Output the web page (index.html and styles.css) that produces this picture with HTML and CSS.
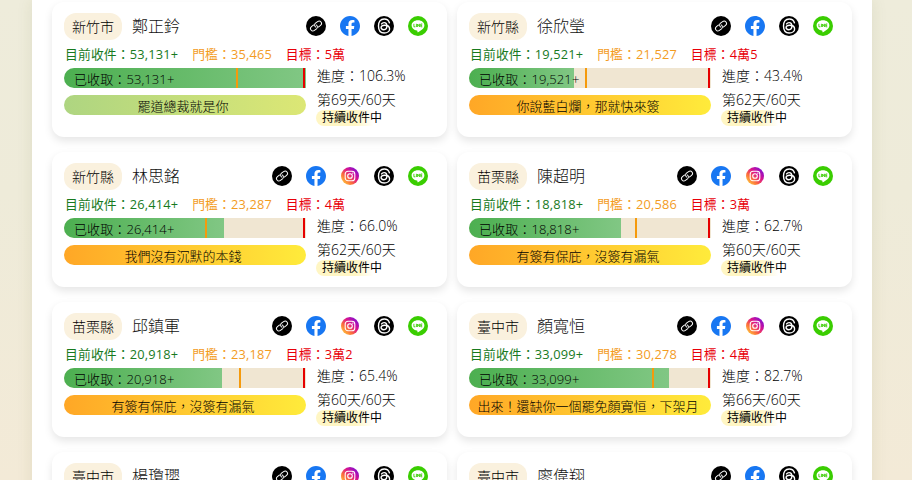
FILE: index.html
```
<!DOCTYPE html>
<html lang="zh-Hant">
<head>
    <meta charset="UTF-8">
    <meta name="viewport" content="width=device-width, initial-scale=1.0">
    <title>連署進度</title>
    <link rel="stylesheet" href="styles.css">
</head>
<body>
    <svg class="sprite" aria-hidden="true">
        <linearGradient id="ig" x1="0" y1="1" x2="1" y2="0">
            <stop offset="0.1" stop-color="#ffc83d"/>
            <stop offset=".35" stop-color="#fb6a3c"/>
            <stop offset=".6" stop-color="#d9128f"/>
            <stop offset=".9" stop-color="#7a10d8"/>
        </linearGradient>
        <symbol id="link" viewBox="0 0 20 20">
            <circle cx="10" cy="10" r="10" fill="#000"/>
            <g fill="none" stroke="#fff" stroke-width=".95" stroke-linecap="round" transform="rotate(-38 10 10)">
                <path d="M9 7.900A2.400 2.400 0 0 0 8.400 7.700H6a2.400 2.400 0 0 0 0 4.800h2.700a2.400 2.400 0 0 0 2.200-3.200"/>
                <path d="M11 12.100a2.400 2.400 0 0 0 .6.2H14a2.400 2.400 0 0 0 0-4.800h-2.700a2.400 2.400 0 0 0-2.200 3.200"/>
            </g>
        </symbol>
        <symbol id="facebook" viewBox="0 0 24 24">
            <circle cx="12" cy="12" r="11.8" fill="#fff"/>
            <path fill="#1877f2" d="M24 12.07C24 5.44 18.63 0 12 0S0 5.44 0 12.07C0 18.1 4.39 23.1 10.13 24v-8.44H7.08v-3.49h3.05V9.41c0-3.02 1.79-4.69 4.53-4.69 1.31 0 2.68.24 2.68.24v2.97h-1.51c-1.49 0-1.96.93-1.96 1.89v2.25h3.33l-.53 3.49h-2.8V24C19.61 23.1 24 18.1 24 12.07z"/>
        </symbol>
        <symbol id="instagram" viewBox="0 0 20 20">
            <circle cx="10" cy="10" r="9" fill="url(#ig)"/>
            <g fill="none" stroke="#fff" stroke-width="1.1">
                <rect x="5.2" y="5.2" width="9.6" height="9.6" rx="2.8"/>
                <circle cx="10" cy="10" r="2.3"/>
            </g>
            <circle cx="12.8" cy="7.2" r=".65" fill="#fff"/>
        </symbol>
        <symbol id="threads" viewBox="0 0 20 20">
            <circle cx="10" cy="10" r="10" fill="#000"/>
            <path fill="none" stroke="#fff" stroke-width="1.4" stroke-linecap="round" d="M15.4 6.800C14.700 4.300 12.900 3 10.200 3 6.400 3 4.500 5.700 4.500 10s1.900 7 5.700 7c3.200 0 5.400-1.800 5.400-4.100 0-2.400-2.300-3.600-5.100-3.600-2.100 0-3.400.9-3.400 2.300 0 1.300 1.200 2.100 2.700 2.100 2 0 3.100-1.400 3.100-3.700 0-2.300-1-3.400-2.800-3.400-1.200 0-2 .4-2.500 1.300"/>
        </symbol>
        <symbol id="line" viewBox="0 0 20 20">
            <circle cx="10" cy="10" r="10" fill="#3acd01"/>
            <path fill="#fff" d="M10 4.300c-3.700 0-6.400 2.200-6.400 5.100 0 2.600 2.200 4.600 5.300 5 .7.1.6.5.5 1.500 0 .5.300.5.700.3 2.300-1.300 6.300-3.800 6.300-6.800C16.400 6.500 13.700 4.300 10 4.300z"/>
            <path fill="none" stroke="#3acd01" stroke-width=".9" d="M5.900 7.800v3h1.500M8.400 7.800v3.200M9.600 11V8l2 2.800V7.800M14.300 8h-1.500v2.800h1.500M12.800 9.400h1.400"/>
        </symbol>
    </svg>

    <main id="cards" class="container"></main>

    <script>
        const cards = [
            { area: '新竹市', name: '鄭正鈐', count: 53131, gate: 35465, goal: 50000, goalText: '5萬', day: 69, slogan: '罷道總裁就是你', ig: false, done: true },
            { area: '新竹縣', name: '徐欣瑩', count: 19521, gate: 21527, goal: 45000, goalText: '4萬5', day: 62, slogan: '你說藍白爛，那就快來簽', ig: false },
            { area: '新竹縣', name: '林思銘', count: 26414, gate: 23287, goal: 40000, goalText: '4萬', day: 62, slogan: '我們沒有沉默的本錢', ig: true },
            { area: '苗栗縣', name: '陳超明', count: 18818, gate: 20586, goal: 30000, goalText: '3萬', day: 60, slogan: '有簽有保庇，沒簽有漏氣', ig: true },
            { area: '苗栗縣', name: '邱鎮軍', count: 20918, gate: 23187, goal: 32000, goalText: '3萬2', day: 60, slogan: '有簽有保庇，沒簽有漏氣', ig: true },
            { area: '臺中市', name: '顏寬恒', count: 33099, gate: 30278, goal: 40000, goalText: '4萬', day: 66, slogan: '出來！還缺你一個罷免顏寬恒，下架月', ig: true },
            { area: '臺中市', name: '楊瓊瓔', count: 30120, gate: 27745, goal: 40000, goalText: '4萬', day: 60, slogan: '有簽有保庇，沒簽有漏氣', ig: true },
            { area: '臺中市', name: '廖偉翔', count: 28450, gate: 26118, goal: 40000, goalText: '4萬', day: 60, slogan: '有簽有保庇，沒簽有漏氣', ig: false }
        ];

        function icon(id) {
            return `<a class="icon"><svg><use href="#${id}"/></svg></a>`;
        }

        function renderCard(c) {
            const percent = c.count / c.goal * 100;
            const icons = ['link', 'facebook', 'instagram', 'threads', 'line'].filter(id => c.ig || id !== 'instagram');
            const count = c.count.toLocaleString('en-US');
            return `
            <section class="card">
                <div class="card-header">
                    <span class="area">${c.area}</span>
                    <span class="name">${c.name}</span>
                    <div class="icons">${icons.map(icon).join('')}</div>
                </div>
                <div class="numbers">
                    <span class="current">目前收件：${count}+</span>
                    <span class="gate">門檻：${c.gate.toLocaleString('en-US')}</span>
                    <span class="goal">目標：${c.goalText}</span>
                </div>
                <div class="card-body">
                    <div class="bars">
                        <div class="progress">
                            <div class="gate-mark" style="left: ${c.gate / c.goal * 100}%"></div>
                            <div class="goal-mark"></div>
                            <div class="fill" style="width: ${Math.min(percent, 100)}%"></div>
                            <span class="progress-text">已收取：${count}+</span>
                        </div>
                        <div class="slogan ${c.done ? 'done' : ''}">${c.slogan}</div>
                    </div>
                    <div class="stats">
                        <div class="percent">進度：${percent.toFixed(1)}%</div>
                        <div class="days">第${c.day}天/60天</div>
                        <span class="state">持續收件中</span>
                    </div>
                </div>
            </section>`;
        }

        document.getElementById('cards').innerHTML = cards.map(renderCard).join('');
    </script>
</body>
</html>
```
FILE: styles.css
```
* {
    box-sizing: border-box;
}
body {
    margin: 0;
    height: 480px;
    overflow: hidden;
    background: linear-gradient(#eeecdb 0%, #eeebd9 40%, #f3ead7 100%);
    font-family: "Open Sans", "Noto Sans CJK TC", sans-serif;
    font-weight: 300;
    color: #000;
}
.sprite {
    position: absolute;
    width: 0;
    height: 0;
}
.container {
    width: 840px;
    margin-left: 32px;
    padding: 2px 20px 20px;
    display: grid;
    grid-template-columns: 395px 395px;
    gap: 15px 10px;
    background: #fff;
    box-shadow: 0 0 15px rgba(90,100,30,0.1);
}
.card {
    height: 135px;
    padding: 11px 12px;
    border-radius: 12px;
    background: #fff;
    box-shadow: 0 4px 8px rgba(0,0,0,0.1);
    white-space: nowrap;
}
.card-header {
    display: flex;
    align-items: center;
    height: 27px;
}
.area {
    height: 27px;
    padding: 0 8px;
    border-radius: 12px;
    background: #faf1de;
    font-size: 14px;
    line-height: 27px;
}
.name {
    margin-left: 10px;
    font-size: 16px;
    line-height: 27px;
    color: #111;
}
.icons {
    display: flex;
    gap: 14px;
    margin-left: auto;
    margin-right: 7px;
    padding-bottom: 1px;
}
.icon,
.icon svg {
    display: block;
    width: 20px;
    height: 20px;
}
.numbers {
    display: flex;
    gap: 14px;
    height: 28px;
    padding-left: 1px;
    font-size: 12.8px;
    line-height: 28px;
    font-weight: 400;
    letter-spacing: 0.16px;
}
.current {
    color: #187a1e;
}
.gate {
    color: #f39c1f;
}
.goal {
    color: #e8000a;
}
.card-body {
    display: flex;
    gap: 10px;
}
.bars {
    width: 242px;
}
.progress {
    position: relative;
    height: 20px;
    margin-bottom: 7px;
    border-radius: 10px 0 0 10px;
    overflow: hidden;
    background: #f0e6d2;
}
.fill {
    height: 20px;
    background: linear-gradient(90deg, #4caf50, #81c784);
}
.gate-mark,
.goal-mark {
    position: absolute;
    top: 0;
    width: 2px;
    height: 20px;
    background: #f59a0c;
}
.goal-mark {
    right: 1px;
    background: #e60000;
}
.progress-text {
    position: absolute;
    top: 0;
    left: 10px;
    font-size: 13px;
    line-height: 22px;
    letter-spacing: 0.1px;
}
.slogan {
    height: 20px;
    padding-right: 4px;
    border-radius: 10px;
    background: linear-gradient(90deg, #ffa726, #ffeb3b);
    font-size: 13px;
    line-height: 22px;
    text-align: center;
}
.slogan.done {
    background: linear-gradient(90deg, #aed581, #dce775);
}
.stats {
    padding-left: 1px;
    font-size: 14px;
}
.percent {
    line-height: 16px;
    margin-bottom: 8px;
}
.days {
    line-height: 16px;
    margin-bottom: 2px;
}
.state {
    display: block;
    margin-left: -1px;
    padding: 0 6px;
    border-radius: 8px;
    background: linear-gradient(90deg, #fff6c4 55%, #fff 80%);
    font-size: 12px;
    line-height: 16px;
    font-weight: 400;
    width: 72px;
}
```
